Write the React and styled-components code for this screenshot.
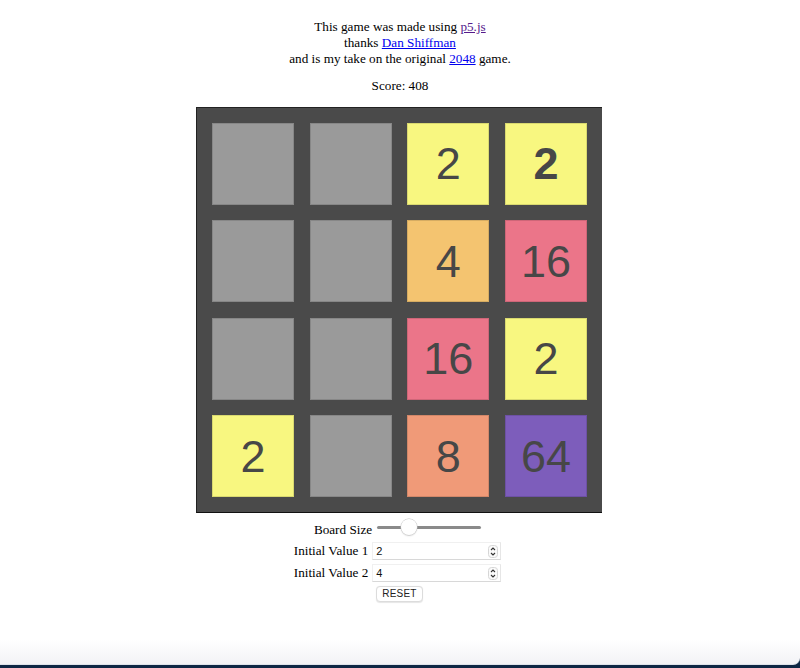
import React from "react";
import styled, { createGlobalStyle } from "styled-components";

const Global = createGlobalStyle`
  html, body { margin: 0; padding: 0; background: #fff; }
  body { font-family: "Liberation Serif", "Times New Roman", serif; color: #000; }
`;

const Page = styled.div`
  min-height: 100vh;
  display: flex;
  flex-direction: column;
  align-items: center;
  box-sizing: border-box;
`;

const Intro = styled.p`
  margin: 19px 0 0;
  font-size: 13.2px;
  line-height: 16px;
  text-align: center;
`;

const Link = styled.a`
  color: ${(p) => (p.$visited ? "#551a8b" : "#0000ee")};
  text-decoration: underline;
`;

const Score = styled.p`
  margin: 11px 0 0;
  font-size: 13.2px;
  line-height: 16px;
  text-align: center;
`;

const Board = styled.div`
  margin-top: 13px;
  margin-right: 2px;
  width: 406px;
  height: 406px;
  box-sizing: border-box;
  background: #4a4a4a;
  border-top: 1px solid #222;
  border-left: 1px solid #222;
  border-bottom: 1px solid #111;
  padding: 15px;
  display: grid;
  grid-template-columns: repeat(4, 1fr);
  grid-template-rows: repeat(4, 1fr);
  gap: 15.5px;
`;

const colors = {
  0: "#9a9a9a",
  2: "#f8f780",
  4: "#f4c470",
  8: "#f09a78",
  16: "#eb7589",
  64: "#7d5dbb",
};

const Tile = styled.div`
  background: ${(p) => colors[p.$v]};
  border: 1px solid rgba(0, 0, 0, 0.12);
  display: flex;
  align-items: center;
  justify-content: center;
  font-family: "Liberation Sans", Arial, sans-serif;
  font-size: 45px;
  font-weight: ${(p) => (p.$bold ? 700 : 400)};
  color: #474747;
  padding-top: 1px;
`;

const Controls = styled.div`
  margin-top: 7px;
  margin-right: 5px;
  display: flex;
  flex-direction: column;
  align-items: center;
  font-size: 13px;
`;

const Row = styled.div`
  display: flex;
  align-items: center;
  gap: ${(p) => (p.$wide ? 5 : 4)}px;
  height: ${(p) => (p.$h ? p.$h : 22)}px;
`;

const Label = styled.span`
  font-size: 13.2px;
`;

const Slider = styled.div`
  position: relative;
  width: 104px;
  height: 16px;
  margin-top: -6px;
`;

const Track = styled.div`
  position: absolute;
  left: 0;
  right: 0;
  top: 7px;
  height: 3px;
  border-radius: 2px;
  background: #8a8a8a;
`;

const Thumb = styled.div`
  position: absolute;
  left: 24px;
  top: 0;
  width: 16px;
  height: 16px;
  border-radius: 50%;
  background: #fff;
  box-shadow: 0 0 0 0.5px #c8c8c8, 0 1px 1.5px rgba(0, 0, 0, 0.18);
`;

const Field = styled.div`
  width: 129px;
  height: 18px;
  box-sizing: border-box;
  display: flex;
  align-items: center;
  justify-content: space-between;
  padding: 0 2px 0 3px;
  background: #fff;
  border: 1px solid #f0f0f0;
  border-bottom: 1px solid #d8d8d8;
  border-right: 1px solid #e6e6e6;
  font-family: "Liberation Sans", Arial, sans-serif;
  font-size: 11px;
  color: #111;
`;

const Spin = styled.svg`
  display: block;
`;

const Reset = styled.button`
  margin-top: 2px;
  margin-left: 4px;
  height: 16px;
  padding: 0 5px;
  font-family: "Liberation Sans", Arial, sans-serif;
  font-size: 10px;
  letter-spacing: 0.2px;
  color: #222;
  background: #fff;
  border: 1px solid #dcdcdc;
  border-radius: 4px;
  box-shadow: 0 0.5px 1px rgba(0, 0, 0, 0.1);
  line-height: 14px;
`;

const Spacer = styled.div`
  flex: 1;
`;

const WindowBottom = styled.div`
  width: 100%;
  height: 28px;
  background: #0f2744;
  display: flex;
  flex-direction: column;
`;

const WindowFade = styled.div`
  flex: 1;
  background: linear-gradient(#ffffff, #f3f3f6);
  border-bottom: 1px solid #dfe3ea;
  border-bottom-right-radius: 7px;
`;

const Edge = styled.div`
  height: 3px;
`;

const board = [
  [0, 0, 2, 2],
  [0, 0, 4, 16],
  [0, 0, 16, 2],
  [2, 0, 8, 64],
];

function Spinner() {
  return (
    <Spin width="10" height="13" viewBox="0 0 10 13">
      <rect x="0.5" y="0.5" width="9" height="12" rx="3" fill="#fafafa" stroke="#d6d6d6" />
      <path d="M3 5 L5 3 L7 5" fill="none" stroke="#333" strokeWidth="1.1" />
      <path d="M3 8 L5 10 L7 8" fill="none" stroke="#333" strokeWidth="1.1" />
    </Spin>
  );
}

export default function App() {
  return (
    <Page>
      <Global />
      <Intro>
        This game was made using <Link $visited href="#">p5.js</Link>
        <br />
        thanks <Link href="#">Dan Shiffman</Link>
        <br />
        and is my take on the original <Link href="#">2048</Link> game.
      </Intro>
      <Score>Score: 408</Score>
      <Board>
        {board.flatMap((row, r) =>
          row.map((v, c) => (
            <Tile key={`${r}-${c}`} $v={v} $bold={r === 0 && c === 3}>
              {v ? v : ""}
            </Tile>
          ))
        )}
      </Board>
      <Controls>
        <Row $h={20} $wide>
          <Label>Board Size</Label>
          <Slider>
            <Track />
            <Thumb />
          </Slider>
        </Row>
        <Row>
          <Label>Initial Value 1</Label>
          <Field>
            <span>2</span>
            <Spinner />
          </Field>
        </Row>
        <Row>
          <Label>Initial Value 2</Label>
          <Field>
            <span>4</span>
            <Spinner />
          </Field>
        </Row>
        <Reset>RESET</Reset>
      </Controls>
      <Spacer />
      <WindowBottom>
        <WindowFade />
        <Edge />
      </WindowBottom>
    </Page>
  );
}
